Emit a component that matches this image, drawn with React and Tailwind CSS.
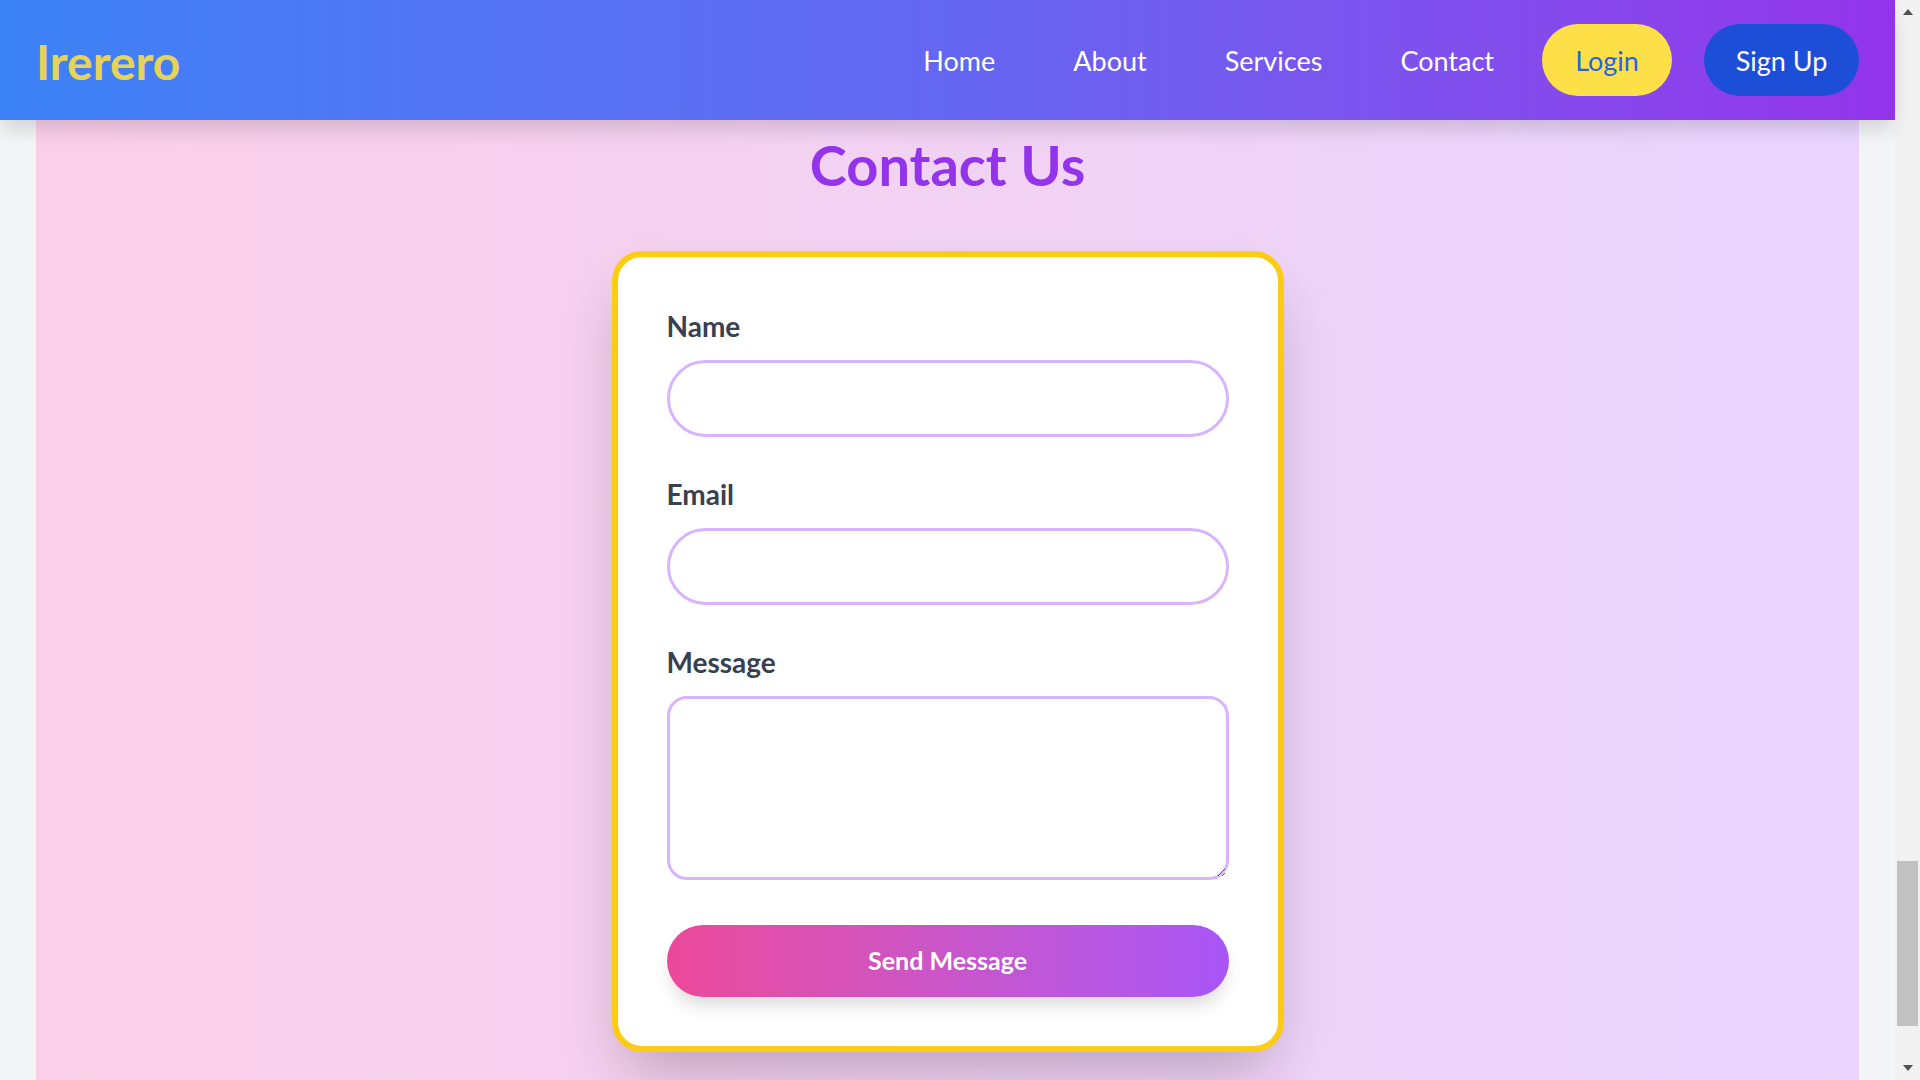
import React from 'react'

const links = ['Home', 'About', 'Services', 'Contact']

function Field({ label, children }) {
  return (
    <div className="flex flex-col">
      <label className="mb-[15px] text-[28px] leading-[38px] font-bold text-[#374151]">{label}</label>
      {children}
    </div>
  )
}

export default function App() {
  return (
    <div className="flex h-[1080px] w-full overflow-hidden font-[Lato,sans-serif]">
      <div className="flex flex-1 flex-col bg-[#f3f4f6]">
        {/* Top bar */}
        <header className="relative z-10 flex h-[120px] shrink-0 items-center justify-between bg-linear-to-r from-[#3b82f6] via-[#6366f1] to-[#9333ea] px-[36px] shadow-[0_12px_20px_-4px_rgba(0,0,0,0.15)]">
          <div className="pt-[3px] text-[48px] leading-none font-bold text-[#e6d35a]">Irerero</div>
          <nav className="flex items-center">
            <div className="flex items-center gap-[78px] pt-[2px]">
              {links.map((l) => (
                <a key={l} className="text-[27px] text-white">{l}</a>
              ))}
            </div>
            <button className="ml-[48px] flex h-[72px] w-[130px] items-center justify-center rounded-full bg-[#fde047] pt-[2px] text-[27px] text-[#2563eb]">
              Login
            </button>
            <button className="ml-[32px] flex h-[72px] w-[155px] items-center justify-center rounded-full bg-[#1d4ed8] pt-[2px] text-[27px] text-white">
              Sign Up
            </button>
          </nav>
        </header>

        <div className="flex-1 px-[36px]">
          <section className="flex h-full flex-col items-center bg-linear-to-r from-[#fbcfe8] to-[#e9d5ff]">
            <h1 className="mt-[17px] text-[56px] leading-[56px] font-bold text-[#9333ea]">Contact Us</h1>

            <form className="mt-[58px] flex w-[672px] flex-col gap-[38px] rounded-[30px] border-[6px] border-[#facc15] bg-white px-[49px] pt-[50px] pb-[49px] shadow-[0_31px_62px_-15px_rgba(0,0,0,0.25)]">
              <Field label="Name">
                <input className="h-[77px] rounded-full border-[3px] border-[#d8b4fe] px-6 outline-none" />
              </Field>
              <Field label="Email">
                <input className="h-[77px] rounded-full border-[3px] border-[#d8b4fe] px-6 outline-none" />
              </Field>
              <Field label="Message">
                <textarea className="block h-[184px] rounded-[20px] border-[3px] border-[#d8b4fe] px-6 py-4 outline-none" />
              </Field>
              <button
                type="button"
                className="mt-[7px] h-[72px] rounded-full bg-linear-to-r from-[#ec4899] to-[#a855f7] text-[25px] font-bold text-white shadow-[0_12px_18px_-4px_rgba(0,0,0,0.15)]"
              >
                Send Message
              </button>
            </form>
          </section>
        </div>
      </div>

      {/* scrollbar strip */}
      <div className="flex w-[25px] shrink-0 flex-col items-center bg-[#f1f1f1]">
        <svg width="10" height="6" viewBox="0 0 10 6" className="mt-[9px]">
          <path d="M0 6 L5 0 L10 6 Z" fill="#505050" />
        </svg>
        <div className="mt-[846px] h-[165px] w-[21px] bg-[#c1c1c1]" />
        <svg width="10" height="6" viewBox="0 0 10 6" className="mt-auto mb-[9px]">
          <path d="M0 0 L5 6 L10 0 Z" fill="#505050" />
        </svg>
      </div>
    </div>
  )
}
